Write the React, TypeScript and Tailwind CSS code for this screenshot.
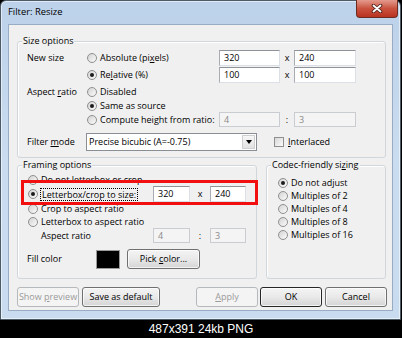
import type { JSX, ReactNode } from 'react';

function Radio({ checked = false }: { checked?: boolean }): JSX.Element {
    return (
        <span className="flex h-[10px] w-[10px] shrink-0 items-center justify-center rounded-full border border-[#8e8f8f] bg-linear-to-br from-[#d2d2d2] to-[#fcfcfc]">
            {checked && <span className="h-[4px] w-[4px] rounded-full bg-[#1c1c1c]" />}
        </span>
    );
}

function Field({ value, className, disabled = false }: { value: string; className: string; disabled?: boolean }): JSX.Element {
    return (
        <div
            className={`flex shrink-0 items-center border pl-[4px] ${className} ${
                disabled
                    ? 'border-[#c9ccd1] bg-[#f4f4f4] text-[#8a8a8a]'
                    : 'border-[#dbdfe6] border-l-[#a9acb2] border-t-[#8e9299] bg-white'
            }`}
        >
            {value}
        </div>
    );
}

function Button({ children, className, disabled = false }: { children: ReactNode; className: string; disabled?: boolean }): JSX.Element {
    return (
        <div
            className={`flex h-[20px] shrink-0 items-center justify-center rounded-[3px] border ${className} ${
                disabled
                    ? 'border-[#b5b9bc] bg-[#f4f4f4] text-[#9a9a9a]'
                    : 'bg-linear-to-b from-[#f4f4f4] via-[#e9e9e9] to-[#d4d4d4] shadow-[inset_0_0_0_1px_rgba(255,255,255,0.7)]'
            }`}
        >
            <span>{children}</span>
        </div>
    );
}

function GroupBox({ title, className, children }: { title: ReactNode; className: string; children: ReactNode }): JSX.Element {
    return (
        <div className={`relative rounded-[3px] border border-[#d0d7dc] shadow-[inset_1px_1px_0_#ffffff] ${className}`}>
            <span className="absolute -top-[7px] left-[4px] bg-[#f0f0f0] px-[1px] leading-[12px]">{title}</span>
            {children}
        </div>
    );
}

function Option({ label, checked = false }: { label: ReactNode; checked?: boolean }): JSX.Element {
    return (
        <div className="flex h-[13px] items-center">
            <span className="ml-[1px]">
                <Radio checked={checked} />
            </span>
            <span className="ml-[3px]">{label}</span>
        </div>
    );
}

export default function App(): JSX.Element {
    return (
        <div className="relative flex h-[338px] w-[402px] flex-col overflow-hidden bg-black font-['Open_Sans',sans-serif] text-[9px] leading-[12px] text-black">
            <div className="flex h-[320px] w-[401px] shrink-0 flex-col rounded-t-[6px] border border-[#4d5a68] bg-linear-to-b from-[#bcd2ea] via-[#cadcef] to-[#c9dbee] shadow-[inset_0_0_0_1px_rgba(255,255,255,0.55)]">
                {/* title bar */}
                <div className="flex h-[23px] shrink-0 items-start">
                    <span className="pl-[7px] pt-[5px] text-[9.4px]">Filter: Resize</span>
                    <div className="-mt-px ml-auto mr-[2px] flex h-[18px] w-[42px] items-center justify-center rounded-b-[4px] border border-t-0 border-[#6b2b21] bg-linear-to-b from-[#e39a8d] via-[#c9523f] to-[#b9321f]">
                        <svg width="12" height="9" viewBox="0 0 12 9">
                            <path d="M2.5 1.5 L9.5 7.5 M9.5 1.5 L2.5 7.5" stroke="#4a1d16" strokeWidth="3.6" strokeLinecap="round" />
                            <path d="M2.5 1.5 L9.5 7.5 M9.5 1.5 L2.5 7.5" stroke="#ffffff" strokeWidth="1.9" strokeLinecap="round" />
                        </svg>
                    </div>
                </div>

                {/* client area */}
                <div className="mx-[7px] flex h-[287px] shrink-0 flex-col border border-[#98adc4] bg-[#f0f0f0] pl-[8px] pr-[6px] pt-[16px]">
                    <GroupBox title="Size options" className="pb-[6px] pl-[9px] pt-[7px]">
                        <div className="flex h-[17px] items-center">
                            <span className="w-[60px] shrink-0">New size</span>
                            <div className="flex w-[132px] shrink-0 items-center">
                                <Radio />
                                <span className="ml-[3px]">
                                    Absolute (pi<u>x</u>els)
                                </span>
                            </div>
                            <Field value="320" className="h-[16px] w-[61px]" />
                            <span className="w-[14px] text-center">x</span>
                            <Field value="240" className="h-[16px] w-[62px]" />
                        </div>
                        <div className="flex h-[17px] items-center">
                            <span className="w-[60px] shrink-0" />
                            <div className="flex w-[132px] shrink-0 items-center">
                                <Radio checked />
                                <span className="ml-[3px]">
                                    Re<u>l</u>ative (%)
                                </span>
                            </div>
                            <Field value="100" className="h-[16px] w-[61px]" />
                            <span className="w-[14px] text-center">x</span>
                            <Field value="100" className="h-[16px] w-[62px]" />
                        </div>
                        <div className="mt-[2px] flex h-[14px] items-center">
                            <span className="w-[60px] shrink-0">
                                Aspect <u>r</u>atio
                            </span>
                            <Radio />
                            <span className="ml-[3px]">Disabled</span>
                        </div>
                        <div className="flex h-[13px] items-center">
                            <span className="w-[60px] shrink-0" />
                            <Radio checked />
                            <span className="ml-[3px]">Same as source</span>
                        </div>
                        <div className="flex h-[15px] items-center">
                            <span className="w-[60px] shrink-0" />
                            <div className="flex w-[132px] shrink-0 items-center">
                                <Radio />
                                <span className="ml-[3px]">Compute height from ratio:</span>
                            </div>
                            <Field value="4" className="h-[15px] w-[61px]" disabled />
                            <span className="w-[14px] text-center">:</span>
                            <Field value="3" className="h-[15px] w-[62px]" disabled />
                        </div>
                        <div className="mt-[6px] flex h-[18px] items-center">
                            <span className="w-[59px] shrink-0">
                                Filter <u>m</u>ode
                            </span>
                            <div className="flex h-[18px] w-[171px] shrink-0 items-center border border-[#8a8e95] bg-white pl-[2px]">
                                <span className="flex-1">Precise bicubic (A=-0.75)</span>
                                <span className="mr-[1px] flex h-[14px] w-[13px] items-center justify-center border border-[#cfcfcf] bg-linear-to-b from-[#f7f7f7] to-[#e2e2e2]">
                                    <svg width="6" height="4" viewBox="0 0 6 4">
                                        <path d="M0 0h6L3 4z" fill="#000" />
                                    </svg>
                                </span>
                            </div>
                            <span className="ml-[17px] h-[10px] w-[10px] border border-[#8e8f8f] bg-linear-to-br from-[#d8d8d8] to-[#fbfbfb]" />
                            <span className="ml-[4px]">
                                <u>I</u>nterlaced
                            </span>
                        </div>
                    </GroupBox>

                    <div className="mt-[7px] flex gap-[9px]">
                        <GroupBox title="Framing options" className="w-[240px] shrink-0 pb-[9px] pl-[9px] pt-[7px]">
                            <Option label="Do not letterbox or crop" />
                            <div className="flex h-[16px] items-center">
                                <div className="flex w-[126px] shrink-0 items-center">
                                    <span className="ml-[1px]">
                                        <Radio checked />
                                    </span>
                                    <span className="ml-[2px] border border-dotted border-black px-[1px] leading-[11px]">
                                        Letterbox/crop to size:
                                    </span>
                                </div>
                                <Field value="320" className="h-[16px] w-[37px]" />
                                <span className="w-[20px] text-center">x</span>
                                <Field value="240" className="h-[16px] w-[36px]" />
                            </div>
                            <Option label="Crop to aspect ratio" />
                            <Option label="Letterbox to aspect ratio" />
                            <div className="flex h-[15px] items-center">
                                <span className="w-[126px] shrink-0 pl-[14px]">Aspect ratio</span>
                                <Field value="4" className="h-[15px] w-[37px]" disabled />
                                <span className="w-[20px] text-center">:</span>
                                <Field value="3" className="h-[15px] w-[36px]" disabled />
                            </div>
                            <div className="mt-[6px] flex h-[20px] items-center">
                                <span className="w-[69px] shrink-0">Fill color</span>
                                <span className="h-[19px] w-[24px] border border-[#9a9a9a] bg-black" />
                                <Button className="ml-[7px] w-[73px] border-[#707070]">
                                    Pick <u>c</u>olor...
                                </Button>
                            </div>
                        </GroupBox>

                        <GroupBox
                            title={
                                <>
                                    Codec-friendly si<u>z</u>ing
                                </>
                            }
                            className="flex-1 pl-[10px] pt-[10px]"
                        >
                            <Option label="Do not adjust" checked />
                            <Option label="Multiples of 2" />
                            <Option label="Multiples of 4" />
                            <Option label="Multiples of 8" />
                            <Option label="Multiples of 16" />
                        </GroupBox>
                    </div>

                    <div className="mt-[8px] flex h-[20px]">
                        <Button className="w-[62px]" disabled>
                            Show <u>p</u>review
                        </Button>
                        <Button className="ml-[3px] w-[78px] border-[#707070]">Save as default</Button>
                        <Button className="ml-[36px] w-[62px]" disabled>
                            <u>A</u>pply
                        </Button>
                        <Button className="ml-[2px] w-[62px] border-[#262626] shadow-[inset_0_0_0_1px_#6a6a6a]">OK</Button>
                        <Button className="ml-[3px] w-[62px] border-[#707070]">Cancel</Button>
                    </div>
                </div>
            </div>

            <div className="flex flex-1 items-center justify-center font-['Liberation_Sans',Arial,sans-serif] text-[12px] text-white">
                487x391 24kb PNG
            </div>

            {/* red annotation */}
            <div className="pointer-events-none absolute left-[21px] top-[180px] h-[25px] w-[237px] border-[3px] border-[#f20f0f]" />
        </div>
    );
}
